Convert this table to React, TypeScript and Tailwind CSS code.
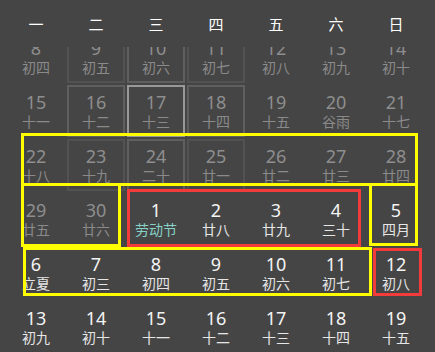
const weekdays = ['一', '二', '三', '四', '五', '六', '日']

type Day = { n: string; l: string; dim?: boolean; fest?: boolean }

const toDays = (list: string[], dim?: boolean): Day[] =>
  list.map((s) => {
    const [n, l] = s.split(' ')
    return { n, l, dim }
  })

const rows: Day[][] = [
  toDays(['8 初四', '9 初五', '10 初六', '11 初七', '12 初八', '13 初九', '14 初十'], true),
  toDays(['15 十一', '16 十二', '17 十三', '18 十四', '19 十五', '20 谷雨', '21 十七'], true),
  toDays(['22 十八', '23 十九', '24 二十', '25 廿一', '26 廿二', '27 廿三', '28 廿四'], true),
  [
    { n: '29', l: '廿五', dim: true },
    { n: '30', l: '廿六', dim: true },
    { n: '1', l: '劳动节', fest: true },
    { n: '2', l: '廿八' },
    { n: '3', l: '廿九' },
    { n: '4', l: '三十' },
    { n: '5', l: '四月' },
  ],
  toDays(['6 立夏', '7 初三', '8 初四', '9 初五', '10 初六', '11 初七', '12 初八']),
  toDays(['13 初九', '14 初十', '15 十一', '16 十二', '17 十三', '18 十四', '19 十五']),
]

// reveal highlight around the hovered cell (row 1, col 2)
function borderFor(r: number, c: number) {
  const d = Math.hypot(r - 1, c - 2)
  if (d === 0) return 'rgba(255,255,255,0.45)'
  if (d <= 1) return 'rgba(255,255,255,0.14)'
  if (d < 1.5) return 'rgba(255,255,255,0.07)'
  return 'transparent'
}

export default function App() {
  return (
    <div className="relative h-[352px] w-[435px] overflow-hidden bg-[#454545] font-['Noto_Sans','Noto_Sans_CJK_SC',sans-serif]">
      {/* Weekday header */}
      <div className="relative z-10 grid h-[47px] grid-cols-[repeat(7,58px)] gap-x-[2px] bg-[#454545] pl-[7px] pt-[14px] text-[15px] leading-[20px] text-white">
        {weekdays.map((d) => (
          <div key={d} className="text-center">
            {d}
          </div>
        ))}
      </div>

      {/* Day grid, scrolled up a bit under the header */}
      <div className="-mt-[16px] grid auto-rows-[52px] grid-cols-[repeat(7,58px)] gap-[2px] pl-[7px]">
        {rows.map((week, r) =>
          week.map((day, c) => (
            <div
              key={`${r}-${c}`}
              className="flex flex-col items-center justify-center gap-[3px] border-2"
              style={{ borderColor: borderFor(r, c) }}
            >
              <span className={`text-[18px] leading-[18px] ${day.dim ? 'text-[#8e8e8e]' : 'text-[#f4f4f4]'}`}>{day.n}</span>
              <span
                className={`text-[14px] leading-[16px] ${
                  day.fest ? 'text-[#86d2c7]' : day.dim ? 'text-[#8a8a8a]' : 'text-[#e6e6e6]'
                }`}
              >
                {day.l}
              </span>
            </div>
          ))
        )}
      </div>

      {/* Annotation boxes */}
      <div className="pointer-events-none absolute left-[21px] top-[133px] h-[53px] w-[397px] border-[3px] border-[#ffff00]" />
      <div className="pointer-events-none absolute left-[21px] top-[183px] h-[64px] w-[100px] border-[3px] border-[#ffff00]" />
      <div className="pointer-events-none absolute left-[127px] top-[189px] h-[58px] w-[234px] border-[3px] border-[#f23b3b]" />
      <div className="pointer-events-none absolute left-[369px] top-[183px] h-[63px] w-[49px] border-[3px] border-[#ffff00]" />
      <div className="pointer-events-none absolute left-[23px] top-[247px] h-[49px] w-[349px] border-[3px] border-[#ffff00]" />
      <div className="pointer-events-none absolute left-[373px] top-[248px] h-[48px] w-[49px] border-[3px] border-[#f23b3b]" />
    </div>
  )
}
